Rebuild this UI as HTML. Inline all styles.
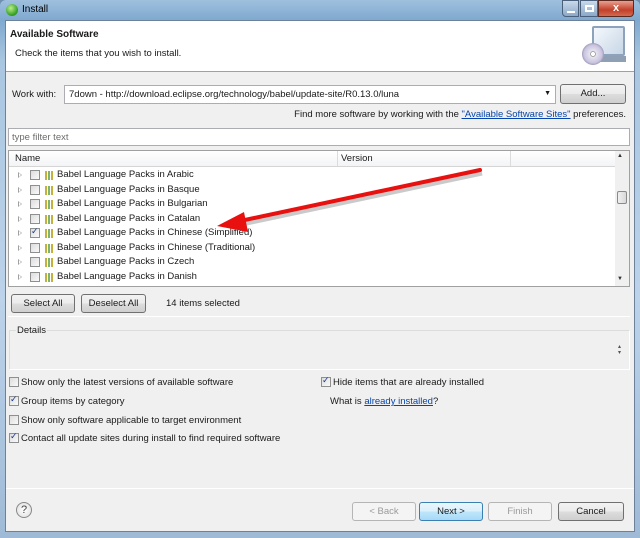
<!DOCTYPE html>
<html><head><style>
*{margin:0;padding:0;box-sizing:border-box}
body{width:640px;height:538px;position:relative;overflow:hidden;background:#6f8fae;font-family:"Liberation Sans",sans-serif;font-size:9.5px;color:#1a1a1a}
.a{position:absolute;white-space:nowrap}
.frame{position:absolute;left:0;top:0;width:640px;height:538px;background:linear-gradient(180deg,#9fc0de 0,#7fa9cf 20px,#a9c6e0 60px,#bcd3ea 300px,#9fbad6 538px);border-radius:6px 6px 0 0}
.client{position:absolute;left:5px;top:20px;width:630px;height:512px;background:#f0f0f0;border:1px solid #6d819a}
.btn{position:absolute;border:1px solid #707070;border-radius:3px;background:linear-gradient(#f2f2f2,#ebebeb 50%,#dddddd 51%,#cfcfcf);text-align:center;font-size:9.5px;line-height:17px}
.cb{position:absolute;width:10px;height:10px;border:1px solid #8e8f8f;background:linear-gradient(135deg,#dcdcdc,#fafafa)}
.ck::after{content:"✓";position:absolute;left:0;top:-3px;font-size:9px;color:#1c3a8a}
.row{position:absolute;left:0;height:14px;width:300px}
.tri{position:absolute;left:10px;top:4px;width:0;height:0;border-left:4px solid #a0a0a0;border-top:3.5px solid transparent;border-bottom:3.5px solid transparent}
.tri::after{content:"";position:absolute;left:-3px;top:-2px;border-left:2px solid #fff;border-top:2px solid transparent;border-bottom:2px solid transparent}
.pk{position:absolute;left:37px;top:3px;width:9px;height:9px;background:repeating-linear-gradient(90deg,#c4b23a 0 2px,#fff 2px 3px,#7fb56a 3px 5px,#fff 5px 6px)}
</style></head><body>
<div class="frame"></div>
<div class="a" style="left:6px;top:4px;width:12px;height:12px;border-radius:50%;background:radial-gradient(circle at 40% 35%,#b8f08a,#2f9a1f 70%)"></div>
<div class="a" style="left:22px;top:4px;font-size:10px;color:#000">Install</div>
<div class="a" style="left:562px;top:0;width:17px;height:17px;background:linear-gradient(#c9d9ea,#8ba8c8);border:1px solid #4a5f7a;border-radius:0 0 0 4px"><div style="position:absolute;left:4px;top:10px;width:8px;height:2px;background:#fff"></div></div>
<div class="a" style="left:580px;top:0;width:18px;height:17px;background:linear-gradient(#c9d9ea,#8ba8c8);border:1px solid #4a5f7a"><div style="position:absolute;left:4px;top:4px;width:9px;height:7px;border:2px solid #fff;border-top-width:2px"></div></div>
<div class="a" style="left:598px;top:0;width:36px;height:17px;background:linear-gradient(#e8a090,#c2402a 60%,#d46a50);border:1px solid #5a2a20;border-radius:0 0 4px 0;color:#fff;font-weight:bold;font-size:11px;text-align:center;line-height:15px">x</div>
<div class="client"></div>
<div class="a" style="left:6px;top:21px;width:628px;height:51px;background:#fff;border-bottom:1px solid #a0a0a0"></div>
<div class="a" style="left:10px;top:29px;font-weight:bold;font-size:10px">Available Software</div>
<div class="a" style="left:15px;top:48px">Check the items that you wish to install.</div>
<div class="a" style="left:592px;top:26px;width:33px;height:30px;border:2px solid #8da3bb;background:linear-gradient(135deg,#f4f8fc,#c7d6e6);border-radius:2px"></div>
<div class="a" style="left:600px;top:56px;width:26px;height:6px;background:#8fa0b4"></div>
<div class="a" style="left:582px;top:43px;width:22px;height:22px;border-radius:50%;background:radial-gradient(circle,#fff 0 2px,#aaa 2px 3px,#e8e6f2 3px,#c9c3de 9px,#9e9ab8 11px)"></div>
<div class="a" style="left:12px;top:89px">Work with:</div>
<div class="a" style="left:64px;top:85px;width:492px;height:19px;background:#fff;border:1px solid #abadb3;padding:3px 4px">7down - http://download.eclipse.org/technology/babel/update-site/R0.13.0/luna<span style="position:absolute;right:4px;top:4px;font-size:7px">▼</span></div>
<div class="btn" style="left:560px;top:84px;width:66px;height:20px;line-height:18px">Add...</div>
<div class="a" style="right:14px;top:109px">Find more software by working with the <span style="color:#0645ad;text-decoration:underline">"Available Software Sites"</span> preferences.</div>
<div class="a" style="left:8px;top:128px;width:622px;height:18px;background:#fff;border:1px solid #abadb3;padding:3px 3px;color:#6d6d6d">type filter text</div>
<div class="a" style="left:8px;top:150px;width:622px;height:137px;background:#fff;border:1px solid #a0a0a0"></div>
<div class="a" style="left:9px;top:151px;width:606px;height:16px;background:linear-gradient(#fff,#f3f4f6);border-bottom:1px solid #d5d5d5"></div>
<div class="a" style="left:337px;top:151px;width:1px;height:15px;background:#dcdcdc"></div>
<div class="a" style="left:510px;top:151px;width:1px;height:15px;background:#dcdcdc"></div>
<div class="a" style="left:15px;top:153px">Name</div>
<div class="a" style="left:341px;top:153px">Version</div>
<div class="a" style="left:615px;top:151px;width:14px;height:135px;background:#f0f0f0"></div>
<div class="a" style="left:617px;top:153px;font-size:6px;color:#333">▲</div>
<div class="a" style="left:617px;top:276px;font-size:6px;color:#333">▼</div>
<div class="a" style="left:617px;top:191px;width:10px;height:13px;border:1px solid #8a8a8a;border-radius:2px;background:linear-gradient(90deg,#f0f0f0,#d8d8d8)"></div>
<div class="a" style="left:8px;top:168px;width:400px;height:118px">
 <div class="row" style="top:0"><div class="tri"></div><div class="cb" style="left:22px;top:2px"></div><div class="pk"></div><div class="a" style="left:49px;top:1px">Babel Language Packs in Arabic</div></div>
 <div class="row" style="top:14.5px"><div class="tri"></div><div class="cb" style="left:22px;top:2px"></div><div class="pk"></div><div class="a" style="left:49px;top:1px">Babel Language Packs in Basque</div></div>
 <div class="row" style="top:29px"><div class="tri"></div><div class="cb" style="left:22px;top:2px"></div><div class="pk"></div><div class="a" style="left:49px;top:1px">Babel Language Packs in Bulgarian</div></div>
 <div class="row" style="top:43.5px"><div class="tri"></div><div class="cb" style="left:22px;top:2px"></div><div class="pk"></div><div class="a" style="left:49px;top:1px">Babel Language Packs in Catalan</div></div>
 <div class="row" style="top:58px"><div class="tri"></div><div class="cb ck" style="left:22px;top:2px"></div><div class="pk"></div><div class="a" style="left:49px;top:1px">Babel Language Packs in Chinese (Simplified)</div></div>
 <div class="row" style="top:72.5px"><div class="tri"></div><div class="cb" style="left:22px;top:2px"></div><div class="pk"></div><div class="a" style="left:49px;top:1px">Babel Language Packs in Chinese (Traditional)</div></div>
 <div class="row" style="top:87px"><div class="tri"></div><div class="cb" style="left:22px;top:2px"></div><div class="pk"></div><div class="a" style="left:49px;top:1px">Babel Language Packs in Czech</div></div>
 <div class="row" style="top:101.5px"><div class="tri"></div><div class="cb" style="left:22px;top:2px"></div><div class="pk"></div><div class="a" style="left:49px;top:1px">Babel Language Packs in Danish</div></div>
</div>
<div class="btn" style="left:11px;top:294px;width:64px;height:19px">Select All</div>
<div class="btn" style="left:81px;top:294px;width:65px;height:19px">Deselect All</div>
<div class="a" style="left:166px;top:298px">14 items selected</div>
<div class="a" style="left:8px;top:316px;width:622px;height:1px;background:#a0a0a0;border-bottom:1px solid #fff"></div>
<div class="a" style="left:9px;top:330px;width:621px;height:40px;border:1px solid #dcdcdc;border-right-color:#fff;border-bottom-color:#fff"></div>
<div class="a" style="left:16px;top:325px;background:#f0f0f0;padding:0 1px">Details</div>
<div class="a" style="left:618px;top:344px;font-size:6px;line-height:6px;color:#555">▴<br>▾</div>
<div class="cb" style="left:9px;top:377px"></div><div class="a" style="left:21px;top:377px">Show only the latest versions of available software</div>
<div class="cb ck" style="left:9px;top:396px"></div><div class="a" style="left:21px;top:396px">Group items by category</div>
<div class="cb" style="left:9px;top:415px"></div><div class="a" style="left:21px;top:415px">Show only software applicable to target environment</div>
<div class="cb ck" style="left:9px;top:433px"></div><div class="a" style="left:21px;top:433px">Contact all update sites during install to find required software</div>
<div class="cb ck" style="left:321px;top:377px"></div><div class="a" style="left:333px;top:377px">Hide items that are already installed</div>
<div class="a" style="left:330px;top:396px">What is <span style="color:#0645ad;text-decoration:underline">already installed</span>?</div>
<div class="a" style="left:6px;top:488px;width:628px;height:1px;background:#a0a0a0;border-bottom:1px solid #fff"></div>
<div class="a" style="left:16px;top:502px;width:16px;height:16px;border-radius:50%;border:1px solid #888;background:radial-gradient(#fff,#ddd);text-align:center;font-size:11px;line-height:14px;color:#444">?</div>
<div class="btn" style="left:352px;top:502px;width:64px;height:19px;color:#9a9a9a;border-color:#b5b5b5;background:#f4f4f4">&lt; Back</div>
<div class="btn" style="left:419px;top:502px;width:64px;height:19px;border-color:#3c7fb1;background:linear-gradient(#eaf6fd,#d9f0fc 50%,#bee6fd 51%,#a7d9f5)">Next &gt;</div>
<div class="btn" style="left:488px;top:502px;width:64px;height:19px;color:#9a9a9a;border-color:#b5b5b5;background:#f4f4f4">Finish</div>
<div class="btn" style="left:558px;top:502px;width:66px;height:19px">Cancel</div>
<svg class="a" style="left:0;top:0" width="640" height="538">
<line x1="480" y1="170" x2="240" y2="221" stroke="#666" stroke-opacity=".35" stroke-width="5" transform="translate(2,3)"/>
<line x1="480" y1="170" x2="240" y2="221" stroke="#e8110f" stroke-width="4" stroke-linecap="round"/>
<polygon points="217,226 244,212 248,232" fill="#e8110f"/>
</svg>
</body></html>
